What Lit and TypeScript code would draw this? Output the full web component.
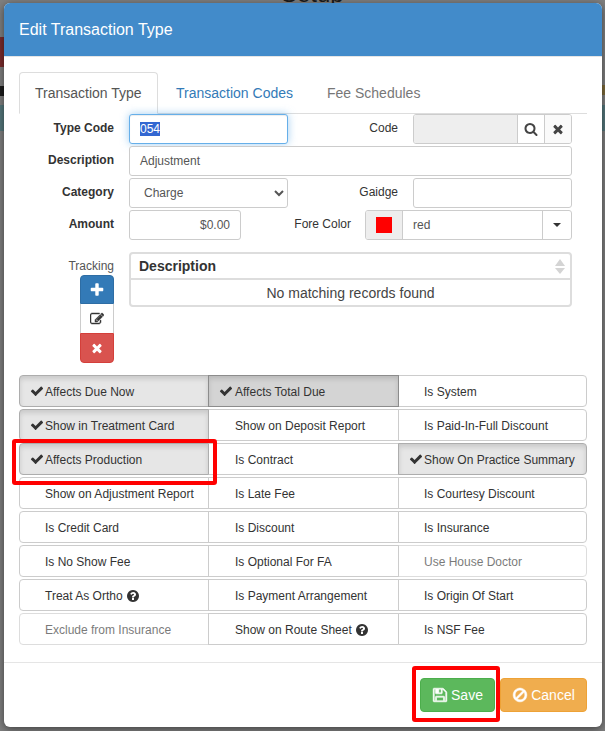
import { LitElement, html, css, svg } from "lit";
import { customElement } from "lit/decorators.js";

const P: Record<string, string> = {
  check: "M1671 566q0 40-28 68l-724 724-136 136q-28 28-68 28t-68-28l-136-136-362-362q-28-28-28-68t28-68l136-136q28-28 68-28t68 28l294 295 656-657q28-28 68-28t68 28l136 136q28 28 28 68z",
  times: "M1490 1322q0 40-28 68l-136 136q-28 28-68 28t-68-28l-294-294-294 294q-28 28-68 28t-68-28l-136-136q-28-28-28-68t28-68l294-294-294-294q-28-28-28-68t28-68l136-136q28-28 68-28t68 28l294 294 294-294q28-28 68-28t68 28l136 136q28 28 28 68t-28 68l-294 294 294 294q28 28 28 68z",
  plus: "M1600 736v192q0 40-28 68t-68 28h-416v416q0 40-28 68t-68 28h-192q-40 0-68-28t-28-68v-416h-416q-40 0-68-28t-28-68v-192q0-40 28-68t68-28h416v-416q0-40 28-68t68-28h192q40 0 68 28t28 68v416h416q40 0 68 28t28 68z",
  search: "M1216 832q0-185-131.5-316.5t-316.5-131.5-316.5 131.5-131.5 316.5 131.5 316.5 316.5 131.5 316.5-131.5 131.5-316.5zm512 832q0 52-38 90t-90 38q-54 0-90-38l-343-342q-179 124-399 124-143 0-273.5-55.5t-225-150-150-225-55.5-273.5 55.5-273.5 150-225 225-150 273.5-55.5 273.5 55.5 225 150 150 225 55.5 273.5q0 220-124 399l343 343q37 37 37 90z",
  save: "M512 1536h768v-384h-768v384zm896 0h128v-896q0-14-10-38.5t-20-34.5l-281-281q-10-10-34-20t-39-10v416q0 40-28 68t-68 28h-576q-40 0-68-28t-28-68v-416h-128v1280h128v-416q0-40 28-68t68-28h832q40 0 68 28t28 68v416zm-384-928v-320q0-13-9.5-22.5t-22.5-9.5h-192q-13 0-22.5 9.5t-9.5 22.5v320q0 13 9.5 22.5t22.5 9.5h192q13 0 22.5-9.5t9.5-22.5zm640 32v928q0 40-28 68t-68 28h-1344q-40 0-68-28t-28-68v-1344q0-40 28-68t68-28h928q40 0 88 20t76 48l280 280q28 28 48 76t20 88z",
  ban: "M1440 893q0-161-87-295l-754 753q137 89 297 89 111 0 211.5-43.5t173.5-116.5 116-174.5 43-212.5zm-999 299l755-754q-135-91-300-91-148 0-273 73t-198 199-73 274q0 162 89 299zm1223-299q0 157-61 300t-163.5 246-245 164-298.5 61-298.5-61-245-164-163.5-246-61-300 61-299.5 163.5-245.5 245-164 298.5-61 298.5 61 245 164 163.5 245.5 61 299.5z",
  help: "M1024 1376v-192q0-14-9-23t-23-9h-192q-14 0-23 9t-9 23v192q0 14 9 23t23 9h192q14 0 23-9t9-23zm256-672q0-88-55.5-163t-138.5-116-170-41q-243 0-371 213-15 24 8 42l132 100q7 6 19 6 16 0 25-12 53-68 86-92 34-24 86-24 48 0 85.5 26t37.5 59q0 38-20 61t-68 45q-63 28-115.5 86.5t-52.5 125.5v36q0 14 9 23t23 9h192q14 0 23-9t9-23q0-19 21.5-49.5t54.5-49.5q32-18 49-28.5t46-35 44.5-48 28-60.5 12.5-81zm384 192q0 209-103 385.5t-279.5 279.5-385.5 103-385.5-103-279.5-279.5-103-385.5 103-385.5 279.5-279.5 385.5-103 385.5 103 279.5 279.5 103 385.5z",
  edit: "M888 1184l116-116-152-152-116 116v56h96v96h56zm440-720q-16-16-33 1l-350 350q-17 17-1 33t33-1l350-350q17-17 1-33zm80 594v190q0 119-84.5 203.5t-203.5 84.5h-832q-119 0-203.5-84.5t-84.5-203.5v-832q0-119 84.5-203.5t203.5-84.5h832q63 0 117 25 15 7 18 23 3 17-9 29l-49 49q-14 14-32 8-23-6-45-6h-832q-66 0-113 47t-47 113v832q0 66 47 113t113 47h832q66 0 113-47t47-113v-126q0-13 9-22l64-64q15-15 35-7t20 29zm-96-738l288 288-672 672h-288v-288zm444 132l-92 92-288-288 92-92q28-28 68-28t68 28l152 152q28 28 28 68t-28 68z",
};

const icon = (n: string, cls = "") =>
  html`<svg class="ic ${cls}" viewBox="0 0 1792 1792" aria-hidden="true">${svg`<path fill="currentColor" d=${P[n]}></path>`}</svg>`;

type T = { t: string; on?: boolean; hover?: boolean; off?: boolean; help?: boolean };
const toggles: T[] = [
  { t: "Affects Due Now", on: true },
  { t: "Affects Total Due", on: true, hover: true },
  { t: "Is System" },
  { t: "Show in Treatment Card", on: true },
  { t: "Show on Deposit Report" },
  { t: "Is Paid-In-Full Discount" },
  { t: "Affects Production", on: true },
  { t: "Is Contract" },
  { t: "Show On Practice Summary", on: true },
  { t: "Show on Adjustment Report" },
  { t: "Is Late Fee" },
  { t: "Is Courtesy Discount" },
  { t: "Is Credit Card" },
  { t: "Is Discount" },
  { t: "Is Insurance" },
  { t: "Is No Show Fee" },
  { t: "Is Optional For FA" },
  { t: "Use House Doctor", off: true },
  { t: "Treat As Ortho", help: true },
  { t: "Is Payment Arrangement" },
  { t: "Is Origin Of Start" },
  { t: "Exclude from Insurance", off: true },
  { t: "Show on Route Sheet", help: true },
  { t: "Is NSF Fee" },
];

@customElement("app-root")
export class AppRoot extends LitElement {
  static styles = css`
    * { box-sizing: border-box; }
    :host {
      display: block; position: relative; width: 605px; height: 731px; overflow: hidden;
      background: #7f7f7f; font-family: "Liberation Sans", Arial, sans-serif; font-size: 12px; color: #333;
    }
    .bg { position: absolute; }
    .bg-title { left: 281px; top: -18px; font-size: 24px; line-height: 24px; color: #1a1a1a; }
    .bg-red { left: 0; top: 37px; width: 4px; height: 30px; background: #7a2c2c; }
    .bg-black { left: 0; top: 86px; width: 4px; height: 10px; background: #1c1c1c; }
    .bg-teal { left: 0; top: 105px; width: 4px; height: 26px; background: #55777c; }
    .bg-brown { left: 602px; top: 85px; width: 3px; height: 10px; background: #7d6a3a; }
    .bg-teal2 { left: 602px; top: 105px; width: 3px; height: 26px; background: #55777c; }

    .ic { display: inline-block; width: 14px; height: 14px; flex: none; }
    .i16 { width: 16px; height: 16px; }
    .heavy path { stroke: currentColor; stroke-width: 60; }

    .modal {
      position: absolute; left: 4px; top: 3px; width: 598px; height: 724px; background: #fff;
      border-radius: 6px; box-shadow: 0 2px 8px rgba(0,0,0,.5); overflow: hidden;
      display: flex; flex-direction: column;
    }
    .head {
      height: 54px; flex: none; background: #428bca; color: #fff; font-size: 16px;
      padding: 0 15px; display: flex; align-items: center; border-bottom: 1px solid #e5e5e5;
    }
    .body { flex: 1; padding: 15px; display: flex; flex-direction: column; }

    .tabs { display: flex; height: 42px; border-bottom: 1px solid #ddd; font-size: 14px; flex: none; white-space: nowrap; }
    .tab { height: 41px; padding: 0 16px; display: flex; align-items: center; color: #777; }
    .tab.link { color: #337ab7; }
    .tab.active {
      height: 42px; width: 139px; padding: 0 15px; color: #555; background: #fff; border: 1px solid #ddd;
      border-bottom: 1px solid #fff; border-radius: 4px 4px 0 0;
    }
    .tab.codes { padding: 0 18px; }
    .tab.fees { padding: 0 16px; }

    .form { display: flex; flex-direction: column; gap: 2px; padding-right: 15px; }
    .row { display: flex; height: 30px; }
    .lbl { flex: none; width: 95px; margin-right: 15px; text-align: right; padding-top: 7px; line-height: 14px; }
    .lbl.b { font-weight: 700; }
    .lbl2 { flex: 1; text-align: right; padding-top: 7px; line-height: 14px; margin-right: 15px; }
    .lbl2.fc { margin-right: 14px; }

    .inp {
      height: 30px; border: 1px solid #ccc; border-radius: 3px; background: #fff; color: #555;
      padding: 0 10px; display: flex; align-items: center; font: inherit; flex: none;
    }
    .w159 { width: 159px; }
    .grow { flex: 1; }
    .focus { border-color: #66afe9; box-shadow: inset 0 1px 1px rgba(0,0,0,.075), 0 0 8px rgba(102,175,233,.6); }
    .sel { background: #3367d1; color: #fff; line-height: 14px; }
    .amount { width: 112px; justify-content: flex-end; }
    select.inp { padding: 0 0 0 10px; font-family: inherit; font-size: 12px; }

    .group { display: flex; height: 30px; flex: none; border: 1px solid #ccc; border-radius: 3px; overflow: hidden; color: #333; }
    .code { width: 159px; }
    .code .fill { width: 104px; background: #eee; border-right: 1px solid #ccc; }
    .code .btn { width: 26px; display: flex; align-items: center; justify-content: center; background: #fff; color: #444; }
    .code .btn + .btn { border-left: 1px solid #ccc; width: 27px; background: #fafafa; }
    .fore { width: 207px; }
    .fore .add { width: 37px; background: #eee; border-right: 1px solid #ccc; display: flex; align-items: center; justify-content: center; }
    .swatch { width: 16px; height: 16px; background: #f00; }
    .fore .txt { flex: 1; padding: 0 10px; display: flex; align-items: center; color: #555; }
    .fore .drop { width: 29px; border-left: 1px solid #ccc; display: flex; align-items: center; justify-content: center; }
    .caret { width: 0; height: 0; border-top: 4px solid #333; border-left: 4px solid transparent; border-right: 4px solid transparent; }

    .track { display: flex; margin-top: 12px; padding-right: 15px; height: 111px; flex: none; }
    .tk-side { width: 95px; margin-right: 15px; flex: none; display: flex; flex-direction: column; align-items: flex-end; }
    .tk-label { height: 23px; padding-top: 7px; line-height: 14px; color: #555; }
    .vbtns { display: flex; flex-direction: column; width: 34px; }
    .vb { height: 29px; display: flex; align-items: center; justify-content: center; border: 1px solid; }
    .vb.add { background: #337ab7; border-color: #2e6da4; color: #fff; border-radius: 4px 4px 0 0; }
    .vb.ed { background: #fff; border-color: #ccc; border-top: 0; border-bottom: 0; color: #333; }
    .vb.del { height: 30px; background: #d9534f; border-color: #d43f3a; color: #fff; border-radius: 0 0 4px 4px; }

    .table { flex: 1; height: 55px; border: 2px solid #ddd; border-radius: 4px; font-size: 14px; display: flex; flex-direction: column; }
    .th { height: 26px; border-bottom: 2px solid #ddd; font-weight: 700; padding: 0 8px; display: flex; align-items: center; justify-content: space-between; flex: none; }
    .sort { display: flex; flex-direction: column; gap: 2px; margin-right: -3px; }
    .up { width: 0; height: 0; border-bottom: 7px solid #d4d4d4; border-left: 5px solid transparent; border-right: 5px solid transparent; }
    .down { width: 0; height: 0; border-top: 6px solid #d4d4d4; border-left: 5px solid transparent; border-right: 5px solid transparent; }
    .td { flex: 1; display: flex; align-items: center; justify-content: center; color: #444; }

    .grid { display: grid; grid-template-columns: 190px 190px 188px; grid-auto-rows: 32px; row-gap: 2px; margin-top: 12px; width: 568px; flex: none; }
    .tg {
      position: relative; display: flex; align-items: center; gap: 3px; border: 1px solid #ccc; background: #fff;
      color: #333; padding: 2px 0 0 26px; white-space: nowrap; margin-left: -1px;
    }
    .tg:nth-child(3n+1) { margin-left: 0; padding-left: 25px; border-radius: 4px 0 0 4px; }
    .tg:nth-child(3n) { padding-left: 25px; border-radius: 0 4px 4px 0; }
    .tg.on { background: #e6e6e6; border-color: #adadad; box-shadow: inset 0 3px 5px rgba(0,0,0,.125); z-index: 1; }
    .tg.hover { background: #d4d4d4; border-color: #8c8c8c; }
    .tg.off { opacity: .65; }
    .tg .chk { position: absolute; left: 10px; top: 8px; width: 14px; height: 14px; }

    .foot {
      height: 65px; flex: none; border-top: 1px solid #e5e5e5; padding: 15px; display: flex; justify-content: flex-end; gap: 5px; font-size: 14px;
    }
    .fb { height: 34px; display: flex; align-items: center; justify-content: center; gap: 3px; color: #fff; border-radius: 4px; border: 1px solid; }
    .fb.save { width: 75px; background: #5cb85c; border-color: #4cae4c; }
    .fb.cancel { width: 87px; background: #f0ad4e; border-color: #eea236; }

    .mark { position: absolute; border: 4px solid #f00; border-radius: 3px; z-index: 5; }
    .m1 { left: 12px; top: 439px; width: 205px; height: 46px; }
    .m2 { left: 412px; top: 666px; width: 88px; height: 56px; }
  `;

  render() {
    return html`
      <div class="bg bg-title">Setup</div>
      <div class="bg bg-red"></div>
      <div class="bg bg-black"></div>
      <div class="bg bg-teal"></div>
      <div class="bg bg-brown"></div>
      <div class="bg bg-teal2"></div>

      <div class="modal">
        <div class="head">Edit Transaction Type</div>
        <div class="body">
          <div class="tabs">
            <div class="tab active">Transaction Type</div>
            <div class="tab link codes">Transaction Codes</div>
            <div class="tab fees">Fee Schedules</div>
          </div>

          <div class="form">
            <div class="row">
              <div class="lbl b">Type Code</div>
              <div class="inp w159 focus"><span class="sel">054</span></div>
              <div class="lbl2">Code</div>
              <div class="group code">
                <div class="fill"></div>
                <div class="btn">${icon("search")}</div>
                <div class="btn">${icon("times")}</div>
              </div>
            </div>
            <div class="row">
              <div class="lbl b">Description</div>
              <div class="inp grow">Adjustment</div>
            </div>
            <div class="row">
              <div class="lbl b">Category</div>
              <select class="inp w159"><option>Charge</option></select>
              <div class="lbl2">Gaidge</div>
              <div class="inp w159"></div>
            </div>
            <div class="row">
              <div class="lbl b">Amount</div>
              <div class="inp amount">$0.00</div>
              <div class="lbl2 fc">Fore Color</div>
              <div class="group fore">
                <div class="add"><div class="swatch"></div></div>
                <div class="txt">red</div>
                <div class="drop"><div class="caret"></div></div>
              </div>
            </div>
          </div>

          <div class="track">
            <div class="tk-side">
              <div class="tk-label">Tracking</div>
              <div class="vbtns">
                <div class="vb add">${icon("plus", "i16")}</div>
                <div class="vb ed">${icon("edit", "heavy")}</div>
                <div class="vb del">${icon("times")}</div>
              </div>
            </div>
            <div class="table">
              <div class="th">
                <span>Description</span>
                <span class="sort"><span class="up"></span><span class="down"></span></span>
              </div>
              <div class="td">No matching records found</div>
            </div>
          </div>

          <div class="grid">
            ${toggles.map(
              (t) => html`<div class="tg ${t.on ? "on" : ""} ${t.hover ? "hover" : ""} ${t.off ? "off" : ""}">
                ${t.on ? icon("check", "chk") : ""}<span>${t.t}</span>${t.help ? icon("help") : ""}
              </div>`
            )}
          </div>
        </div>
        <div class="foot">
          <div class="fb save">${icon("save", "i16 heavy")}<span>Save</span></div>
          <div class="fb cancel">${icon("ban", "i16 heavy")}<span>Cancel</span></div>
        </div>
      </div>

      <div class="mark m1"></div>
      <div class="mark m2"></div>
    `;
  }
}
